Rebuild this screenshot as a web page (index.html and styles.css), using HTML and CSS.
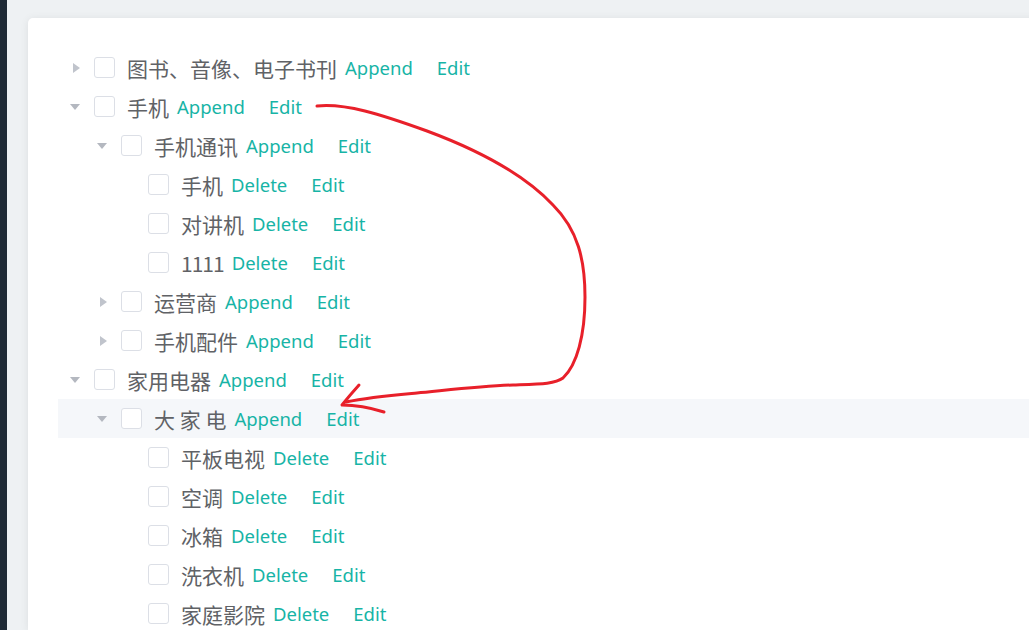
FILE: index.html
```html
<!DOCTYPE html>
<html lang="en">
<head>
    <meta charset="UTF-8">
    <title>Tree</title>
    <link rel="stylesheet" href="styles.css">
</head>
<body>
    <div class="layout">
        <div class="sidebar"></div>
        <div class="main">
            <div class="card">
                <!-- tree -->
                <div class="tree">
                    <div class="node lv1">
                        <span class="caret right"></span><span class="check"></span>
                        <span class="label">图书、音像、电子书刊</span><a class="btn">Append</a><a class="btn">Edit</a>
                    </div>
                    <div class="node lv1">
                        <span class="caret down"></span><span class="check"></span>
                        <span class="label">手机</span><a class="btn">Append</a><a class="btn">Edit</a>
                    </div>
                    <div class="node lv2">
                        <span class="caret down"></span><span class="check"></span>
                        <span class="label">手机通讯</span><a class="btn">Append</a><a class="btn">Edit</a>
                    </div>
                    <div class="node lv3">
                        <span class="caret leaf"></span><span class="check"></span>
                        <span class="label">手机</span><a class="btn">Delete</a><a class="btn">Edit</a>
                    </div>
                    <div class="node lv3">
                        <span class="caret leaf"></span><span class="check"></span>
                        <span class="label">对讲机</span><a class="btn">Delete</a><a class="btn">Edit</a>
                    </div>
                    <div class="node lv3">
                        <span class="caret leaf"></span><span class="check"></span>
                        <span class="label num">1111</span><a class="btn">Delete</a><a class="btn">Edit</a>
                    </div>
                    <div class="node lv2">
                        <span class="caret right"></span><span class="check"></span>
                        <span class="label">运营商</span><a class="btn">Append</a><a class="btn">Edit</a>
                    </div>
                    <div class="node lv2">
                        <span class="caret right"></span><span class="check"></span>
                        <span class="label">手机配件</span><a class="btn">Append</a><a class="btn">Edit</a>
                    </div>
                    <div class="node lv1">
                        <span class="caret down"></span><span class="check"></span>
                        <span class="label">家用电器</span><a class="btn">Append</a><a class="btn">Edit</a>
                    </div>
                    <div class="node lv2 current">
                        <span class="caret down"></span><span class="check"></span>
                        <span class="label">大 家 电</span><a class="btn">Append</a><a class="btn">Edit</a>
                    </div>
                    <div class="node lv3">
                        <span class="caret leaf"></span><span class="check"></span>
                        <span class="label">平板电视</span><a class="btn">Delete</a><a class="btn">Edit</a>
                    </div>
                    <div class="node lv3">
                        <span class="caret leaf"></span><span class="check"></span>
                        <span class="label">空调</span><a class="btn">Delete</a><a class="btn">Edit</a>
                    </div>
                    <div class="node lv3">
                        <span class="caret leaf"></span><span class="check"></span>
                        <span class="label">冰箱</span><a class="btn">Delete</a><a class="btn">Edit</a>
                    </div>
                    <div class="node lv3">
                        <span class="caret leaf"></span><span class="check"></span>
                        <span class="label">洗衣机</span><a class="btn">Delete</a><a class="btn">Edit</a>
                    </div>
                    <div class="node lv3">
                        <span class="caret leaf"></span><span class="check"></span>
                        <span class="label">家庭影院</span><a class="btn">Delete</a><a class="btn">Edit</a>
                    </div>
                </div>
            </div>
        </div>
    </div>

    <!-- hand drawn arrow on top -->
    <svg class="scribble" width="1029" height="630" viewBox="0 0 1029 630">
        <path d="M317 106 C345 103, 380 114, 427 131 C470 147, 520 170, 553 205 C578 230, 585 260, 585 297 C585 335, 577 365, 563 378 C555 384, 540 384, 513 385 C480 386, 440 391, 417 393 C395 395, 370 397, 346 402"/>
        <path d="M359 385 Q350 395 342 405 Q362 405 384 412"/>
    </svg>
</body>
</html>
```

FILE: styles.css
```css
*{
    margin: 0;
    padding: 0;
    box-sizing: border-box;
}
html,body{
    height: 100%;
    overflow: hidden;
}
body{
    font-family: "Noto Sans", "Noto Sans CJK SC", sans-serif;
    background: #eef1f3;
}
.layout{
    display: flex;
    height: 100%;
}
.sidebar{
    width: 7px;
    flex-shrink: 0;
    background: #1f2a36;
}
.main{
    flex: 1;
    min-width: 0;
    padding: 18px 0 0 21px;
    overflow: hidden;
}
.card{
    width: 1040px;
    height: 100%;
    overflow: hidden;
    background: #fff;
    border-radius: 5px 5px 0 0;
    box-shadow: 0 1px 8px rgba(0,0,0,0.08);
    padding: 30px 0 0 30px;
}
.node{
    display: flex;
    align-items: center;
    height: 39px;
    white-space: nowrap;
}
.lv2{
    padding-left: 27px;
}
.lv3{
    padding-left: 54px;
}
.current{
    background: #f5f7fa;
}
.caret{
    width: 36px;
    height: 36px;
    position: relative;
    flex-shrink: 0;
}
.caret::after{
    content: "";
    position: absolute;
    width: 0;
    height: 0;
}
.caret.right::after{
    left: 15px;
    top: 13px;
    border-left: 7px solid #c0c4cc;
    border-top: 5px solid transparent;
    border-bottom: 5px solid transparent;
}
.caret.down::after{
    left: 12px;
    top: 15px;
    border-top: 6px solid #b4b8c0;
    border-left: 5.5px solid transparent;
    border-right: 5.5px solid transparent;
}
.check{
    width: 21px;
    height: 21px;
    border: 1px solid #dcdfe6;
    border-radius: 3px;
    background: #fff;
    margin-right: 12px;
    flex-shrink: 0;
}
.label{
    font-family: "Noto Sans CJK SC", sans-serif;
    font-size: 21px;
    color: #606266;
    margin-right: 8px;
}
.num{
    letter-spacing: -1px;
}
.btn{
    font-size: 18.5px;
    color: #17b4a6;
    margin-right: 24px;
    cursor: pointer;
}
.scribble{
    position: absolute;
    top: 0;
    left: 0;
    pointer-events: none;
}
.scribble path{
    fill: none;
    stroke: #e8202a;
    stroke-width: 3;
    stroke-linecap: round;
    stroke-linejoin: round;
}
```
